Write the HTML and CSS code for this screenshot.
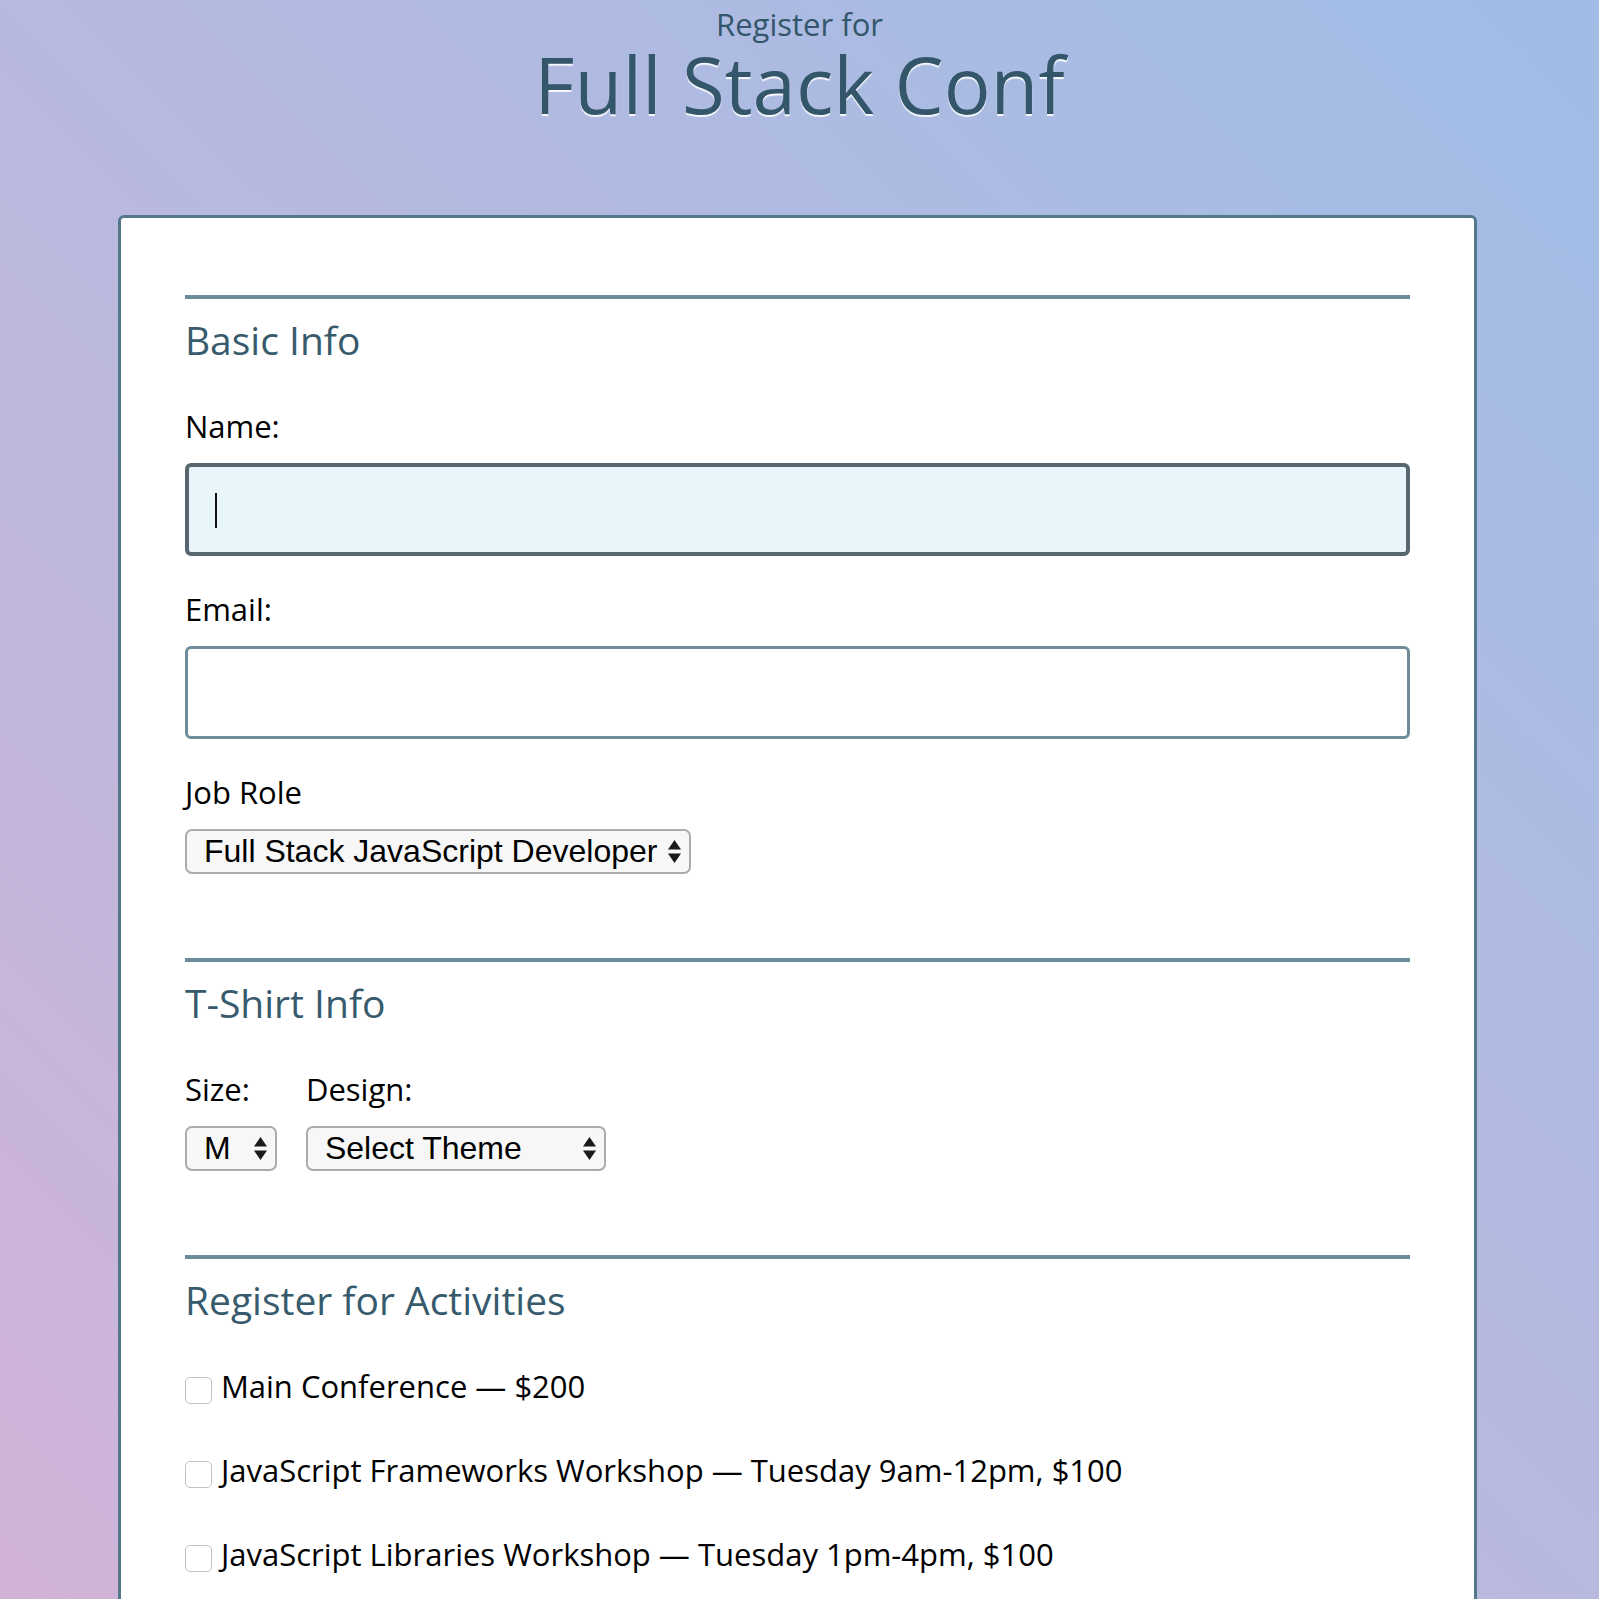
FILE: index.html
```html
<!DOCTYPE html>
<html lang="en">
<head>
<meta charset="utf-8">
<title>Register for Full Stack Conf</title>
<link rel="stylesheet" href="styles.css">
</head>
<body>
<header class="page-header">
  <span class="kicker">Register for</span>
  <h1 class="title">Full Stack Conf</h1>
</header>
<main class="card">
  <form class="form">
    <section class="section section-first">
      <h2 class="section-title">Basic Info</h2>
      <label class="field-label" for="name">Name:</label>
      <div class="input-wrap">
        <input class="text-input is-focused" type="text" id="name" name="user-name">
        <span class="caret"></span>
      </div>
      <label class="field-label spaced" for="email">Email:</label>
      <input class="text-input" type="email" id="email" name="user-email">
      <label class="field-label spaced" for="title">Job Role</label>
      <div class="select-wrap">
        <select class="select" id="title" name="user-title">
          <option>Full Stack JavaScript Developer</option>
          <option>Front End Developer</option>
          <option>Back End Developer</option>
          <option>Designer</option>
          <option>Student</option>
          <option>Other</option>
        </select>
        <svg class="select-arrows" viewBox="0 0 13 23" width="13" height="23"><polygon points="6.5,0 13,9.5 0,9.5"/><polygon points="0,13.5 13,13.5 6.5,23"/></svg>
      </div>
    </section>

    <section class="section">
      <h2 class="section-title">T-Shirt Info</h2>
      <div class="shirt-row">
        <div class="shirt-col">
          <label class="field-label" for="size">Size:</label>
          <div class="select-wrap">
            <select class="select" id="size" name="user-size">
              <option>S</option>
              <option selected>M</option>
              <option>L</option>
              <option>XL</option>
            </select>
            <svg class="select-arrows" viewBox="0 0 13 23" width="13" height="23"><polygon points="6.5,0 13,9.5 0,9.5"/><polygon points="0,13.5 13,13.5 6.5,23"/></svg>
          </div>
        </div>
        <div class="shirt-col">
          <label class="field-label" for="design">Design:</label>
          <div class="select-wrap">
            <select class="select" id="design" name="user-design">
              <option>Select Theme</option>
              <option>Theme - JS Puns</option>
              <option>Theme - I &#9829; JS</option>
            </select>
            <svg class="select-arrows" viewBox="0 0 13 23" width="13" height="23"><polygon points="6.5,0 13,9.5 0,9.5"/><polygon points="0,13.5 13,13.5 6.5,23"/></svg>
          </div>
        </div>
      </div>
    </section>

    <section class="section activities">
      <h2 class="section-title">Register for Activities</h2>
      <label class="activity"><input class="checkbox" type="checkbox" name="all"><span>Main Conference — $200</span></label>
      <label class="activity"><input class="checkbox" type="checkbox" name="js-frameworks"><span>JavaScript Frameworks Workshop — Tuesday 9am-12pm, $100</span></label>
      <label class="activity"><input class="checkbox" type="checkbox" name="js-libs"><span>JavaScript Libraries Workshop — Tuesday 1pm-4pm, $100</span></label>
    </section>
  </form>
</main>
</body>
</html>
```

FILE: styles.css
```css
html, body {
  margin: 0;
  padding: 0;
}

body {
  font-family: "Open Sans", "Noto Sans", sans-serif;
  color: #000;
  background: linear-gradient(to top right, #d1b3d7 0%, #b8b9df 50%, #9fbde6 100%) fixed;
  min-height: 100vh;
}

.page-header {
  text-align: center;
  padding-top: 6px;
  padding-bottom: 86px;
  color: #33566a;
}

.kicker {
  display: block;
  font-size: 31px;
  line-height: 36px;
}

.title {
  margin: -3px 0 0;
  font-size: 78px;
  line-height: 90px;
  font-weight: 400;
  color: #33566a;
  text-shadow: 0 2px 1px rgba(255, 255, 255, 0.9);
}

.card {
  display: block;
  width: 85%;
  margin: 0 0 0 calc(7.5% - 2px);
  box-sizing: border-box;
  background: #fff;
  border: 3px solid #52788a;
  border-radius: 6px;
  padding: 77px 64px 64px;
}

.form {
  margin: 0;
}

.section {
  border-top: 4px solid #6b8c9b;
  padding: 17px 0 84px;
}

.section.activities {
  padding-bottom: 40px;
}

.section-title {
  margin: 0;
  font-size: 39px;
  line-height: 48px;
  font-weight: 400;
  color: #375b6c;
}

.field-label {
  display: block;
  font-size: 31px;
  line-height: 40px;
  margin: 42px 0 17px;
}

.field-label.spaced {
  margin-top: 33px;
}

.input-wrap {
  position: relative;
}

.text-input {
  display: block;
  width: 100%;
  box-sizing: border-box;
  height: 93px;
  margin: 0;
  padding: 0 26px;
  font-family: inherit;
  font-size: 31px;
  border: 3px solid #6e8d9b;
  border-radius: 6px;
  background: #fff;
  outline: none;
}

.text-input.is-focused {
  border: 4px solid #58666f;
  background: #e8f5fb;
}

.caret {
  position: absolute;
  left: 30px;
  top: 30px;
  width: 2px;
  height: 35px;
  background: #111;
}

.select-wrap {
  position: relative;
  display: inline-block;
  vertical-align: top;
}

.select {
  -webkit-appearance: none;
  appearance: none;
  display: block;
  height: 45px;
  margin: 0;
  padding: 0 31px 0 17px;
  font-family: "Liberation Sans", Arial, sans-serif;
  font-size: 32px;
  line-height: 41px;
  color: #000;
  background: #f7f7f7;
  border: 2px solid #ababab;
  border-radius: 7px;
}

.select-arrows {
  position: absolute;
  right: 10px;
  top: 11px;
  fill: #1a1a1a;
  pointer-events: none;
}

.shirt-row {
  display: flex;
  gap: 29px;
  align-items: flex-start;
}

.shirt-col .field-label {
  margin-bottom: 17px;
}

.activity {
  display: flex;
  align-items: flex-start;
  gap: 9px;
  font-size: 31px;
  line-height: 40px;
  margin-top: 44px;
}

.section-title + .activity {
  margin-top: 42px;
}

.checkbox {
  -webkit-appearance: none;
  appearance: none;
  flex-shrink: 0;
  width: 27px;
  height: 27px;
  margin: 11px 0 0;
  box-sizing: border-box;
  border: 1px solid #c2c2c2;
  border-radius: 5px;
  background: #fff;
}
```
